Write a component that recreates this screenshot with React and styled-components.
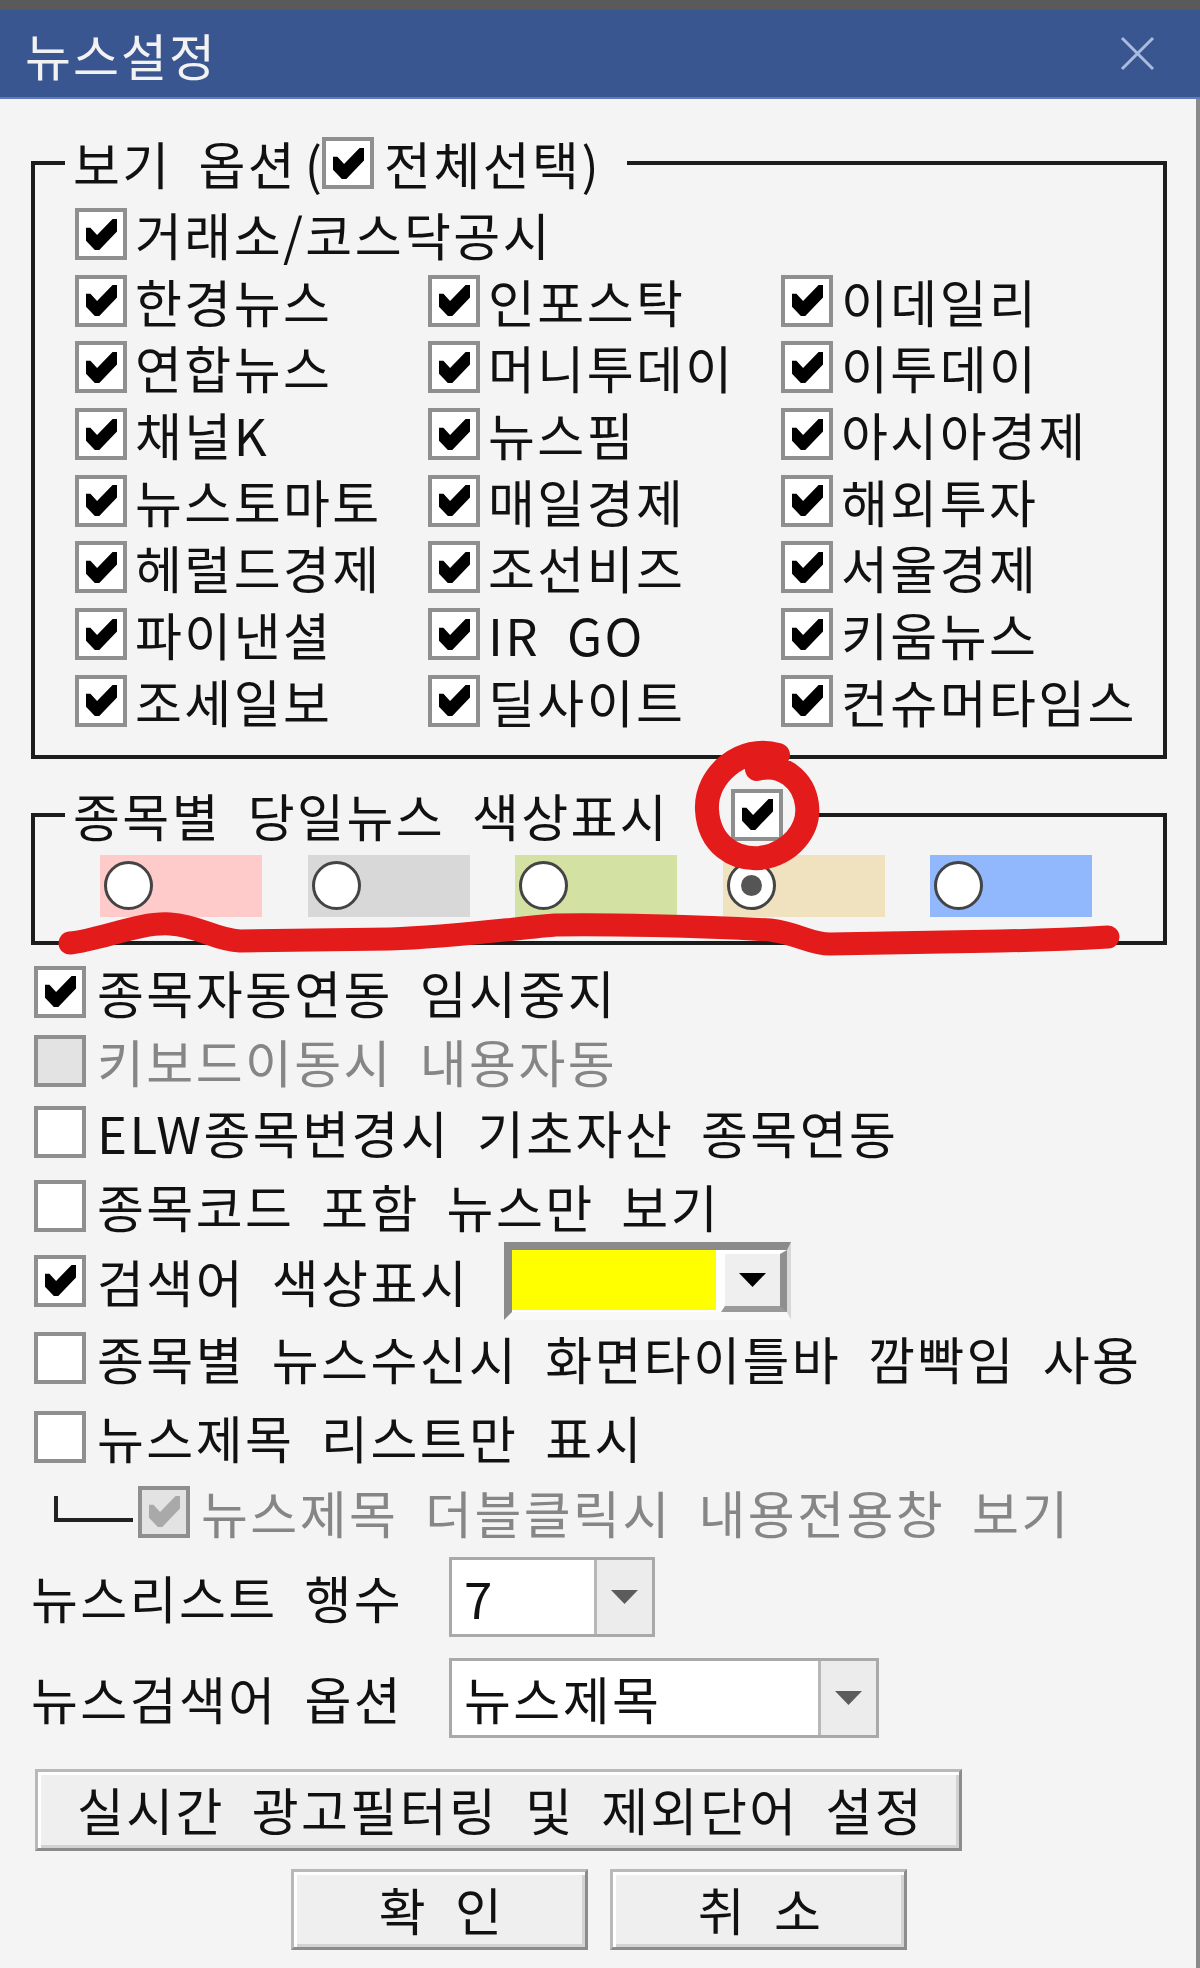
import React from 'react';
import styled, { createGlobalStyle } from 'styled-components';

const GlobalStyle = createGlobalStyle`
  html, body { margin: 0; padding: 0; background: #5a5a5a; }
  body { font-family: "Noto Sans CJK KR", "Noto Sans", sans-serif; }
  * { box-sizing: border-box; }
`;

const Page = styled.div`
  position: relative;
  width: 1200px;
  height: 1968px;
  padding-top: 10px;
  overflow: hidden;
`;

const Window = styled.div`
  display: flex;
  flex-direction: column;
  width: 1200px;
  height: 1958px;
`;

const TitleBar = styled.div`
  flex: none;
  height: 89px;
  background: #3a5691;
  border-bottom: 2px solid #5b7bbb;
  display: flex;
  align-items: center;
  justify-content: space-between;
  padding: 0 45px 0 25px;
`;

const Title = styled.span`
  font-size: 50px;
  font-weight: 400;
  line-height: 1;
  color: #f2f2f2;
  letter-spacing: 2px;
`;

const Panel = styled.div`
  flex: 1;
  background: #f4f4f4;
  border-right: 4px solid #8a8a8a;
  padding: 0 29px 0 31px;
  display: flex;
  flex-direction: column;
  font-size: 51px;
  font-weight: 400;
  line-height: 52px;
  letter-spacing: 2.4px;
  word-spacing: 13px;
  color: #111;
`;

const Group = styled.fieldset`
  margin: ${p => p.$mt}px 0 0 0;
  padding: ${p => p.$pt}px 0 ${p => p.$pb}px 0;
  border: 4px solid #1c1c1c;
  min-width: 0;
`;

const Legend = styled.legend`
  margin-left: 30px;
  padding: 0 ${p => p.$pr}px 0 8px;
  height: 52px;
`;

const LegendInner = styled.span`
  display: inline-flex;
  align-items: center;
  height: 52px;
  white-space: nowrap;
`;

const Paren = styled.span`
  display: inline-block;
  width: 25px;
  letter-spacing: 0;
  text-align: ${p => (p.$right ? 'left' : 'right')};
`;

const Spaced = styled.span`
  display: inline-flex;
  margin-left: ${p => p.$ml || 0}px;
`;

const SourceGrid = styled.div`
  display: grid;
  grid-template-columns: 353px 353px 1fr;
  grid-auto-rows: 52px;
  row-gap: 14.7px;
  padding-left: 40px;
`;

const Cell = styled.label`
  display: flex;
  align-items: center;
  gap: 8px;
  white-space: nowrap;
  grid-column: ${p => (p.$span ? '1 / span 3' : 'auto')};
`;

const Box = styled.span`
  flex: none;
  width: 52px;
  height: 52px;
  border: 4px solid #8f8f8f;
  background: ${p => (p.$disabled ? '#e3e3e3' : '#ffffff')};
  display: flex;
  align-items: center;
  justify-content: center;
`;

const SwatchRow = styled.div`
  display: flex;
  gap: 45.5px;
  padding-left: 65px;
`;

const Swatch = styled.span`
  display: flex;
  align-items: center;
  width: 162px;
  height: 62px;
  background: ${p => p.$c};
`;

const Radio = styled.span`
  width: 49px;
  height: 49px;
  margin-left: 4px;
  border-radius: 50%;
  background: #fff;
  border: 3px solid #444;
  display: flex;
  align-items: center;
  justify-content: center;
  &::after {
    content: '';
    display: ${p => (p.$on ? 'block' : 'none')};
    width: 21px;
    height: 21px;
    border-radius: 50%;
    background: #555;
  }
`;

const OptionRow = styled.label`
  display: flex;
  align-items: center;
  margin-top: ${p => p.$mt}px;
  padding-left: ${p => p.$pl ?? 3}px;
  gap: ${p => p.$gap ?? 11}px;
  white-space: nowrap;
  color: ${p => (p.$disabled ? '#868686' : '#111')};
`;

const Tree = styled.span`
  flex: none;
  align-self: flex-start;
  width: 79px;
  height: 26px;
  margin: 10px -6px 0 0;
  border-left: 4px solid #222;
  border-bottom: 4px solid #222;
`;

const ColorCombo = styled.span`
  display: flex;
  width: 287px;
  height: 78px;
  margin-left: 24px;
  border-style: solid;
  border-width: 8px 4px 8px 8px;
  border-color: #8b8b8b #d8d8d8 #f9f9f9 #8b8b8b;
  background: #fff;
`;

const ColorFill = styled.span`
  flex: 1;
  background: #ffff00;
  margin-bottom: 2px;
`;

const SunkenBtn = styled.span`
  width: 66px;
  margin-left: 5px;
  border-style: solid;
  border-width: 4px 7px 6px 4px;
  border-color: #ffffff #8f8f8f #9a9a9a #ffffff;
  background: #efefef;
  display: flex;
  align-items: center;
  justify-content: center;
`;

const FieldRow = styled.div`
  display: flex;
  align-items: center;
  margin-top: ${p => p.$mt}px;
`;

const FieldLabel = styled.span`
  width: 418px;
  white-space: nowrap;
`;

const FlatCombo = styled.div`
  display: flex;
  width: ${p => p.$w}px;
  height: 80px;
  border: 3px solid #a9a9a9;
  background: #fff;
`;

const ComboValue = styled.span`
  flex: 1;
  padding-left: 12px;
  line-height: 74px;
  white-space: nowrap;
`;

const FlatArrow = styled.span`
  width: 58px;
  border-left: 3px solid #b8b8b8;
  background: #ececec;
  display: flex;
  align-items: center;
  justify-content: center;
`;

const Button = styled.button`
  font: inherit;
  letter-spacing: inherit;
  word-spacing: inherit;
  color: #111;
  width: ${p => p.$w}px;
  height: ${p => p.$h}px;
  margin-left: ${p => p.$ml || 0}px;
  padding: 0 0 0 4px;
  background: #efefef;
  border-style: solid;
  border-width: 3px;
  border-color: #b9b9b9 #8c8c8c #8c8c8c #b9b9b9;
  box-shadow: inset 3px 3px 0 #ffffff, inset -3px -3px 0 #d2d2d2;
  line-height: 1;
  white-space: nowrap;
`;

const WideButtonRow = styled.div`
  display: flex;
  margin-top: 31px;
`;

const ButtonPair = styled.div`
  display: flex;
  justify-content: center;
  gap: 22px;
  margin-top: 18px;
`;

const Annotation = styled.svg`
  position: absolute;
  left: 0;
  top: 0;
  pointer-events: none;
`;

const CheckGlyph = ({ color = '#000' }) => (
  <svg width="31" height="31" viewBox="0 0 7 7" aria-hidden="true">
    <polygon
      fill={color}
      points="0,2 1,2 2.5,3.6 6,0 7,0 7,2.8 3,7 2,7 0,4.9"
    />
  </svg>
);

const Check = ({ checked, disabled }) => (
  <Box $disabled={disabled}>
    {checked && <CheckGlyph color={disabled ? '#a9a9a9' : '#000'} />}
  </Box>
);

const Arrow = ({ color }) => (
  <svg width="27" height="14" viewBox="0 0 27 14" aria-hidden="true">
    <path d="M0 0H27L13.5 14Z" fill={color} />
  </svg>
);

const CloseIcon = () => (
  <svg width="35" height="35" viewBox="0 0 35 35" aria-hidden="true">
    <path d="M2 2L33 33M33 2L2 33" stroke="#a9bce0" strokeWidth="3" />
  </svg>
);

const sources = [
  ['한경뉴스', '인포스탁', '이데일리'],
  ['연합뉴스', '머니투데이', '이투데이'],
  ['채널K', '뉴스핌', '아시아경제'],
  ['뉴스토마토', '매일경제', '해외투자'],
  ['헤럴드경제', '조선비즈', '서울경제'],
  ['파이낸셜', 'IR GO', '키움뉴스'],
  ['조세일보', '딜사이트', '컨슈머타임스'],
];

const swatches = [
  { c: '#ffcaca', on: false },
  { c: '#d8d8d8', on: false },
  { c: '#d3e1a3', on: false },
  { c: '#f0e2bf', on: true },
  { c: '#91b7fc', on: false },
];

export default function App() {
  return (
    <>
      <GlobalStyle />
      <Page>
        <Window>
          <TitleBar>
            <Title>뉴스설정</Title>
            <CloseIcon />
          </TitleBar>
          <Panel>
            <Group $mt={38} $pt={19} $pb={28}>
              <Legend $pr={21}>
                <LegendInner>
                  <span>보기 옵션</span>
                  <Paren>(</Paren>
                  <Check checked />
                  <Spaced $ml={10}>전체선택</Spaced>
                  <Paren $right>)</Paren>
                </LegendInner>
              </Legend>
              <SourceGrid>
                <Cell $span>
                  <Check checked />
                  <span>거래소/코스닥공시</span>
                </Cell>
                {sources.flat().map(name => (
                  <Cell key={name}>
                    <Check checked />
                    <span>{name}</span>
                  </Cell>
                ))}
              </SourceGrid>
            </Group>

            <Group $mt={30} $pt={14} $pb={24}>
              <Legend $pr={24}>
                <LegendInner>
                  <span>종목별 당일뉴스 색상표시</span>
                  <Spaced $ml={62}>
                    <Check checked />
                  </Spaced>
                </LegendInner>
              </Legend>
              <SwatchRow>
                {swatches.map(s => (
                  <Swatch key={s.c} $c={s.c}>
                    <Radio $on={s.on} />
                  </Swatch>
                ))}
              </SwatchRow>
            </Group>

            <OptionRow $mt={21}>
              <Check checked />
              <span>종목자동연동 임시중지</span>
            </OptionRow>
            <OptionRow $mt={17} $disabled>
              <Check disabled />
              <span>키보드이동시 내용자동</span>
            </OptionRow>
            <OptionRow $mt={19}>
              <Check />
              <span>ELW종목변경시 기초자산 종목연동</span>
            </OptionRow>
            <OptionRow $mt={22}>
              <Check />
              <span>종목코드 포함 뉴스만 보기</span>
            </OptionRow>
            <OptionRow $mt={10}>
              <Check checked />
              <span>검색어 색상표시</span>
              <ColorCombo>
                <ColorFill />
                <SunkenBtn>
                  <Arrow color="#000" />
                </SunkenBtn>
              </ColorCombo>
            </OptionRow>
            <OptionRow $mt={12}>
              <Check />
              <span>종목별 뉴스수신시 화면타이틀바 깜빡임 사용</span>
            </OptionRow>
            <OptionRow $mt={27}>
              <Check />
              <span>뉴스제목 리스트만 표시</span>
            </OptionRow>
            <OptionRow $mt={23} $pl={23} $gap={11} $disabled>
              <Tree />
              <Check checked disabled />
              <span>뉴스제목 더블클릭시 내용전용창 보기</span>
            </OptionRow>

            <FieldRow $mt={19}>
              <FieldLabel>뉴스리스트 행수</FieldLabel>
              <FlatCombo $w={206}>
                <ComboValue>7</ComboValue>
                <FlatArrow>
                  <Arrow color="#5c5c5c" />
                </FlatArrow>
              </FlatCombo>
            </FieldRow>
            <FieldRow $mt={21}>
              <FieldLabel>뉴스검색어 옵션</FieldLabel>
              <FlatCombo $w={430}>
                <ComboValue>뉴스제목</ComboValue>
                <FlatArrow>
                  <Arrow color="#5c5c5c" />
                </FlatArrow>
              </FlatCombo>
            </FieldRow>

            <WideButtonRow>
              <Button $w={927} $h={82} $ml={4}>
                실시간 광고필터링 및 제외단어 설정
              </Button>
            </WideButtonRow>
            <ButtonPair>
              <Button $w={297} $h={81}>확 인</Button>
              <Button $w={297} $h={81}>취 소</Button>
            </ButtonPair>
          </Panel>
        </Window>

        <Annotation width="1200" height="1968" viewBox="0 0 1200 1968">
          <path
            d="M778 755 C742 744 705 775 707 810 C709 845 735 860 760 858 C790 854 810 830 807 805 C804 780 782 762 757 769"
            fill="none"
            stroke="#e31b1b"
            strokeWidth="24"
            strokeLinecap="round"
            strokeLinejoin="round"
          />
          <path
            d="M70 943 C100 940 140 922 170 924 C200 926 215 940 240 941 L390 939 C450 937 500 930 555 925 C600 924 700 926 770 930 C800 934 810 944 830 944 L1000 941 C1050 940 1090 938 1108 937"
            fill="none"
            stroke="#e31b1b"
            strokeWidth="23"
            strokeLinecap="round"
            strokeLinejoin="round"
          />
        </Annotation>
      </Page>
    </>
  );
}
